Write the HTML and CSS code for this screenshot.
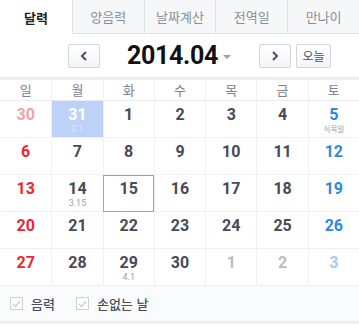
FILE: index.html
```html
<!DOCTYPE html>
<html lang="ko">
<head>
    <meta charset="UTF-8">
    <meta name="viewport" content="width=device-width, initial-scale=1.0">
    <title>달력</title>
    <link rel="stylesheet" href="styles.css">
</head>
<body>
    <!-- 탭 -->
    <ul class="tabs">
        <li class="tab active">달력</li>
        <li class="tab">양음력</li>
        <li class="tab">날짜계산</li>
        <li class="tab">전역일</li>
        <li class="tab">만나이</li>
    </ul>

    <!-- 월 이동 -->
    <div class="month-nav">
        <div class="nav-left">
            <button class="arrow-btn">
                <svg width="8" height="10" viewBox="0 0 8 10"><path d="M6 1 L2 5 L6 9" fill="none" stroke="#4a5060" stroke-width="2"/></svg>
            </button>
        </div>
        <div class="month-title">2014.04<span class="caret"></span></div>
        <div class="nav-right">
            <button class="arrow-btn">
                <svg width="8" height="10" viewBox="0 0 8 10"><path d="M2 1 L6 5 L2 9" fill="none" stroke="#4a5060" stroke-width="2"/></svg>
            </button>
            <button class="today-btn">오늘</button>
        </div>
    </div>

    <div class="divider"></div>

    <!-- 달력 -->
    <div class="weekdays">
        <div>일</div><div>월</div><div>화</div><div>수</div><div>목</div><div>금</div><div>토</div>
    </div>
    <div class="days" id="days"></div>

    <!-- 옵션 -->
    <div class="options">
        <label class="check"><span class="box"><svg width="9" height="8" viewBox="0 0 9 8"><path d="M1 4 L3.5 6.5 L8 1.5" fill="none" stroke="#c4c7cc" stroke-width="1.2"/></svg></span>음력</label>
        <label class="check"><span class="box"><svg width="9" height="8" viewBox="0 0 9 8"><path d="M1 4 L3.5 6.5 L8 1.5" fill="none" stroke="#c4c7cc" stroke-width="1.2"/></svg></span>손없는 날</label>
    </div>

    <script>
        // 날짜 데이터
        const cells = [
            { n: 30, cls: "other sun" },
            { n: 31, cls: "picked", sub: "3.1" },
            { n: 1 }, { n: 2 }, { n: 3 }, { n: 4 },
            { n: 5, cls: "sat", sub: "식목일", ko: true },
            { n: 6, cls: "sun" }, { n: 7 }, { n: 8 }, { n: 9 }, { n: 10 }, { n: 11 }, { n: 12, cls: "sat" },
            { n: 13, cls: "sun" }, { n: 14, sub: "3.15" }, { n: 15, cls: "today" }, { n: 16 }, { n: 17 }, { n: 18 }, { n: 19, cls: "sat" },
            { n: 20, cls: "sun" }, { n: 21 }, { n: 22 }, { n: 23 }, { n: 24 }, { n: 25 }, { n: 26, cls: "sat" },
            { n: 27, cls: "sun" }, { n: 28 }, { n: 29, sub: "4.1" }, { n: 30 },
            { n: 1, cls: "other" }, { n: 2, cls: "other" }, { n: 3, cls: "other sat" }
        ];

        const days = document.getElementById("days");
        cells.forEach(c => {
            const day = document.createElement("div");
            day.className = "day " + (c.cls || "");
            day.innerHTML = `<span class="num">${c.n}</span>` +
                (c.sub ? `<span class="sub${c.ko ? " ko" : ""}">${c.sub}</span>` : "");
            days.appendChild(day);
        });
    </script>
</body>
</html>
```
FILE: styles.css
```css
/* 기본 */
body {
    margin: 0;
    font-family: Roboto, "Noto Sans CJK KR", sans-serif;
    background: #fff;
    color: #464b57;
}

/* 탭 */
.tabs {
    list-style: none;
    margin: 0;
    padding: 0;
    display: grid;
    grid-template-columns: repeat(5, 1fr);
    height: 34px;
}
.tab {
    display: flex;
    align-items: center;
    justify-content: center;
    background: #f5f7f9;
    border-left: 1px solid #dfe3e7;
    border-bottom: 1px solid #dfe3e7;
    color: #8a8f99;
    font-size: 13px;
}
.tab.active {
    background: #fff;
    border-left: none;
    border-bottom: none;
    color: #222;
    font-weight: bold;
}

/* 월 이동 */
.month-nav {
    display: grid;
    grid-template-columns: 1fr auto 1fr;
    align-items: center;
    height: 43px;
}
.nav-left {
    display: flex;
    justify-content: flex-end;
}
.nav-right {
    display: flex;
    gap: 5px;
}
.arrow-btn, .today-btn {
    height: 24px;
    border: 1px solid #d3d7dc;
    border-radius: 2px;
    background: linear-gradient(#fff, #f4f5f7);
    padding: 0;
    display: flex;
    align-items: center;
    justify-content: center;
}
.arrow-btn {
    width: 32px;
}
.today-btn {
    width: 35px;
    font-family: "Noto Sans CJK KR", sans-serif;
    font-size: 12px;
    color: #4a5060;
}
.month-title {
    display: flex;
    align-items: center;
    padding: 0 28px 0 27px;
    font-size: 25px;
    font-weight: bold;
    color: #111;
    letter-spacing: -0.3px;
}
.caret {
    margin-left: 5px;
    margin-top: 3px;
    border-left: 4px solid transparent;
    border-right: 4px solid transparent;
    border-top: 4px solid #9a9ea6;
}

.divider {
    height: 3px;
    background: #eceef1;
}

/* 달력 */
.weekdays, .days {
    display: grid;
    grid-template-columns: repeat(7, 1fr);
}
.weekdays div {
    height: 20px;
    line-height: 19px;
    text-align: center;
    font-family: "Noto Sans CJK KR", sans-serif;
    font-size: 13px;
    color: #7d828b;
    border-left: 1px solid #eef0f2;
    border-bottom: 1px solid #e8eaed;
}
.weekdays div:first-child {
    border-left: none;
}
.day {
    height: 37px;
    box-sizing: border-box;
    border-left: 1px solid #eef0f2;
    border-bottom: 1px solid #eef0f2;
    display: flex;
    flex-direction: column;
    align-items: center;
    padding-top: 4px;
}
.day:nth-child(7n + 1) {
    border-left: none;
}
.num {
    font-size: 16px;
    font-weight: bold;
    line-height: 19px;
}
.sub {
    font-size: 9px;
    line-height: 11px;
    color: #9a9ea5;
}
.sub.ko {
    font-size: 7.5px;
}
.day.sun {
    color: #ec2730;
}
.day.sat {
    color: #2a8ae2;
}
.day.other {
    color: #b9bcc1;
}
.day.other.sun {
    color: #f5a2a4;
}
.day.other.sat {
    color: #a3cdf2;
}
.day.picked {
    background: #bed1f8;
    color: #fff;
}
.day.picked .sub {
    color: #dfe8fb;
}
.day.today {
    border-left-color: #7ea7ec;
    border-bottom-color: #7ea7ec;
    box-shadow: inset 0 1px 0 #7ea7ec, inset -1px 0 0 #7ea7ec;
}

/* 옵션 */
.options {
    display: flex;
    gap: 21px;
    align-items: center;
    height: 35px;
    padding-left: 10px;
    background: #fafbfc;
    border-bottom: 3px solid #eceef1;
}
.check {
    display: flex;
    align-items: center;
    gap: 8px;
    font-family: "Noto Sans CJK KR", sans-serif;
    font-size: 13px;
    font-weight: 500;
    color: #4a4f5a;
}
.box {
    width: 11px;
    height: 11px;
    border: 1px solid #cdd0d5;
    background: #fff;
    display: flex;
    align-items: center;
    justify-content: center;
}
```
